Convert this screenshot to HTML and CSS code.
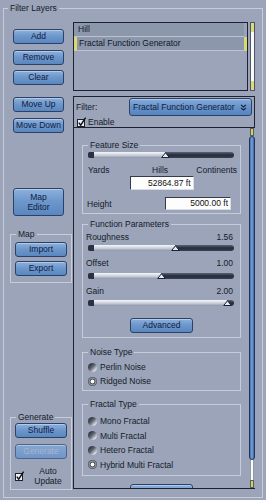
FILE: index.html
```html
<!DOCTYPE html>
<html lang="en">
<head>
    <meta charset="UTF-8">
    <meta name="viewport" content="width=device-width, initial-scale=1.0">
    <title>Filter Layers</title>
    <link rel="stylesheet" href="styles.css">
</head>
<body>
    <fieldset class="group outer">
        <legend>Filter Layers</legend>
        <div class="layout">
            <div class="side">
                <div class="stack stack-list">
                    <button class="btn">Add</button>
                    <button class="btn">Remove</button>
                    <button class="btn">Clear</button>
                </div>
                <div class="stack stack-move">
                    <button class="btn">Move Up</button>
                    <button class="btn">Move Down</button>
                </div>
                <button class="btn btn-tall">Map<br>Editor</button>

                <fieldset class="group side-group map-group">
                    <legend>Map</legend>
                    <button class="btn">Import</button>
                    <button class="btn">Export</button>
                </fieldset>

                <fieldset class="group side-group gen-group">
                    <legend>Generate</legend>
                    <button class="btn">Shuffle</button>
                    <button class="btn" disabled>Generate</button>
                    <div class="auto-update">
                        <svg class="check" width="10" height="10" viewBox="0 0 10 10">
                            <rect x="0.5" y="2.5" width="7" height="7" fill="#eef0f4" stroke="#1c2130"/>
                            <path d="M1.8 5.6 L3.7 8.2 L8.6 0.6" fill="none" stroke="#111" stroke-width="1.4"/>
                        </svg>
                        <span class="auto-text">Auto<br>Update</span>
                    </div>
                </fieldset>
            </div>

            <div class="main">
                <div class="list-wrap">
                    <ul class="layer-list">
                        <li>Hill</li>
                        <li class="selected">Fractal Function Generator</li>
                    </ul>
                    <div class="thin-scroll"></div>
                </div>

                <div class="panel">
                    <div class="panel-head">
                        <div class="filter-row">
                            <span class="filter-label">Filter:</span>
                            <div class="select">
                                <span>Fractal Function Generator</span>
                                <svg width="7" height="7" viewBox="0 0 7 7">
                                    <path d="M1 0.8 L3.5 3 L6 0.8 M1 3.8 L3.5 6 L6 3.8" fill="none" stroke="#15203a" stroke-width="1.1"/>
                                </svg>
                            </div>
                        </div>
                        <div class="enable-row">
                            <svg class="check" width="10" height="10" viewBox="0 0 10 10">
                                <rect x="0.5" y="2.5" width="7" height="7" fill="#eef0f4" stroke="#1c2130"/>
                                <path d="M1.8 5.6 L3.7 8.2 L8.6 0.6" fill="none" stroke="#111" stroke-width="1.4"/>
                            </svg>
                            <span>Enable</span>
                        </div>
                    </div>

                    <div class="panel-body">
                        <div class="scroll-content">
                            <fieldset class="group box fs-size">
                                <legend>Feature Size</legend>
                                <div class="slider"><span class="lo" style="width: 53%"></span><span class="knob"><svg width="9" height="6" viewBox="0 0 9 6"><path d="M0.7 5.5 L4.5 0.7 L8.3 5.5 Z" fill="#e8ecf2" stroke="#1b2233"/></svg></span><span class="hi"></span></div>
                                <div class="scale-row">
                                    <span>Yards</span>
                                    <span>Hills</span>
                                    <span class="scale-end">Continents</span>
                                </div>
                                <div class="num num-size">52864.87 ft</div>
                                <div class="height-row">
                                    <span>Height</span>
                                    <div class="num num-height">5000.00 ft</div>
                                </div>
                            </fieldset>

                            <fieldset class="group box fs-params">
                                <legend>Function Parameters</legend>
                                <div class="param-row"><span>Roughness</span><span>1.56</span></div>
                                <div class="slider s-rough"><span class="lo" style="width: 59.6%"></span><span class="knob"><svg width="9" height="6" viewBox="0 0 9 6"><path d="M0.7 5.5 L4.5 0.7 L8.3 5.5 Z" fill="#e8ecf2" stroke="#1b2233"/></svg></span><span class="hi"></span></div>
                                <div class="param-row"><span>Offset</span><span>1.00</span></div>
                                <div class="slider s-offset"><span class="lo" style="width: 50%"></span><span class="knob"><svg width="9" height="6" viewBox="0 0 9 6"><path d="M0.7 5.5 L4.5 0.7 L8.3 5.5 Z" fill="#e8ecf2" stroke="#1b2233"/></svg></span><span class="hi"></span></div>
                                <div class="param-row"><span>Gain</span><span>2.00</span></div>
                                <div class="slider s-gain"><span class="lo" style="width: 95.5%"></span><span class="knob"><svg width="9" height="6" viewBox="0 0 9 6"><path d="M0.7 5.5 L4.5 0.7 L8.3 5.5 Z" fill="#e8ecf2" stroke="#1b2233"/></svg></span><span class="hi"></span></div>
                                <button class="btn btn-wide">Advanced</button>
                            </fieldset>

                            <fieldset class="group box fs-noise">
                                <legend>Noise Type</legend>
                                <div class="radio-row"><span class="radio"></span>Perlin Noise</div>
                                <div class="radio-row"><span class="radio on"></span>Ridged Noise</div>
                            </fieldset>

                            <fieldset class="group box fs-fractal">
                                <legend>Fractal Type</legend>
                                <div class="radio-row"><span class="radio"></span>Mono Fractal</div>
                                <div class="radio-row"><span class="radio"></span>Multi Fractal</div>
                                <div class="radio-row"><span class="radio"></span>Hetero Fractal</div>
                                <div class="radio-row"><span class="radio on"></span>Hybrid Multi Fractal</div>
                            </fieldset>

                            <button class="btn btn-wide btn-cut" aria-hidden="true"></button>
                        </div>

                        <div class="thick-scroll">
                            <span class="cap"></span>
                            <span class="bar"></span>
                            <span class="track"></span>
                            <span class="cap"></span>
                        </div>
                    </div>
                </div>
            </div>
        </div>
    </fieldset>
</body>
</html>
```

FILE: styles.css
```css
* {
    box-sizing: border-box;
}

body {
    margin: 0;
    width: 266px;
    height: 500px;
    overflow: hidden;
    background-color: #9ba4b8;
    font-family: "Liberation Sans", Arial, sans-serif;
    font-size: 8.5px;
    line-height: 10px;
    color: #141b2b;
}

/* group boxes */

.group {
    margin: 0;
    padding: 0;
    min-width: 0;
    border: 1px solid #c6cdda;
}

.group legend {
    padding: 0 2px;
    margin-left: 5px;
    line-height: 10px;
}

.outer {
    margin: 3px 3px 0;
    padding: 9px 6px 7px 0;
}

.outer > legend {
    margin-left: 4px;
}

.layout {
    display: flex;
}

/* left column */

.side {
    width: 69px;
    display: flex;
    flex-direction: column;
    align-items: flex-start;
}

.stack {
    display: flex;
    flex-direction: column;
}

.stack-list {
    margin-top: 7px;
    gap: 5.5px;
}

.stack-move {
    margin-top: 12px;
    gap: 6px;
}

.btn {
    display: block;
    width: 51px;
    height: 15px;
    margin: 0 0 0 9px;
    padding: 0;
    border: 1px solid #2b4169;
    border-radius: 3px;
    background: linear-gradient(#8db0dc, #6e98cc 45%, #5a87c0);
    box-shadow: inset 0 1px 0 rgba(255, 255, 255, 0.35);
    font: inherit;
    line-height: 13px;
    color: #10203f;
    text-align: center;
}

.btn:disabled {
    border-color: #4b658f;
    background: linear-gradient(#86a6d0, #7095c6);
    color: #a3b7d3;
}

.btn-tall {
    height: 28px;
    margin-top: 55px;
    line-height: 10px;
}

.side-group {
    margin-left: 6px;
    width: 62px;
}

.side-group .btn {
    width: 52px;
    margin-left: 4px;
}

.map-group {
    margin-top: 13px;
    padding: 3px 0 6px;
}

.map-group .btn + .btn {
    margin-top: 4px;
}

.gen-group {
    margin-top: 129px;
    padding: 1px 0 3px;
}

.gen-group .btn + .btn {
    margin-top: 6px;
}

.auto-update {
    display: flex;
    align-items: center;
    margin-top: 7px;
    padding-left: 4px;
}

.check {
    display: block;
    flex: none;
}

.auto-text {
    flex: 1;
    text-align: center;
}

/* right column */

.main {
    width: 183px;
}

.list-wrap {
    display: flex;
    height: 69px;
    margin-bottom: 5px;
}

.layer-list {
    width: 175px;
    margin: 0;
    padding: 0;
    list-style: none;
    border: 1px solid #1c2232;
}

.layer-list li {
    height: 14px;
    margin-right: 3px;
    padding-left: 4px;
    line-height: 13px;
    background-color: #8d97ab;
    border-bottom: 1px solid #bcc3d0;
    color: #10182a;
}

.layer-list li.selected {
    margin-right: 0;
    padding-left: 2px;
    border-left: 3px solid #d9d873;
    border-right: 3px solid #d9d873;
}

.thin-scroll {
    width: 5px;
    margin-left: 2px;
    border: 1px solid #4d5466;
    background: linear-gradient(#dcdb78 0 9px, #fbfbfb 9px calc(100% - 9px), #dcdb78 calc(100% - 9px));
}

.panel {
    width: 182px;
    height: 393px;
    border: 1px solid #1c2232;
    border-right: none;
}

.panel-head {
    height: 31px;
    border-right: 1px solid #1c2232;
    border-bottom: 1px solid #1c2232;
}

.filter-row {
    display: flex;
    align-items: center;
    height: 19px;
    padding: 1px 2px 0;
}

.filter-label {
    flex: 1;
}

.select {
    display: flex;
    align-items: center;
    justify-content: space-between;
    width: 123px;
    height: 18px;
    padding: 0 4px 0 3px;
    border: 1px solid #2b4169;
    border-radius: 3px;
    background: linear-gradient(#86abd9, #6a95cb 45%, #5684bf);
    box-shadow: inset 0 1px 0 rgba(255, 255, 255, 0.3);
    color: #10203f;
}

.enable-row {
    display: flex;
    align-items: center;
    gap: 1px;
    height: 11px;
    padding-left: 3px;
}

.panel-body {
    display: flex;
    height: 360px;
}

.scroll-content {
    width: 175px;
    overflow: hidden;
    padding-top: 12px;
}

.box {
    margin-left: 8px;
    width: 159px;
}

/* slider */

.slider {
    display: flex;
    width: 146px;
    height: 6px;
    margin-left: 5px;
    border-radius: 3px;
    background: linear-gradient(#5a6377, #242b3b 50%, #39414f);
}

.slider .lo {
    display: block;
    border-left: 6px solid #2a3142;
    border-radius: 2px 0 0 2px;
    background: linear-gradient(#f6f7fa, #c9ced9 55%, #8b93a6);
}

.slider .knob {
    display: flex;
    justify-content: center;
    width: 0;
}

.slider .knob svg {
    flex: none;
    display: block;
}

.slider .hi {
    flex: 1;
}

/* feature size */

.fs-size {
    padding: 2px 0 3px;
}

.scale-row {
    display: grid;
    grid-template-columns: 64px auto 1fr;
    margin-top: 7px;
    padding: 0 3px 0 5px;
}

.scale-end {
    justify-self: end;
}

.num {
    height: 14px;
    padding-right: 2px;
    line-height: 12px;
    text-align: right;
    background-color: #fdfdfd;
    border: 1px solid;
    border-color: #343a4a #d9dde5 #d9dde5 #343a4a;
    color: #111;
}

.num-size {
    width: 64px;
    margin: 1px auto 0;
}

.height-row {
    display: flex;
    align-items: center;
    margin-top: 7px;
    padding-left: 4px;
}

.num-height {
    width: 66px;
    height: 13px;
    line-height: 11px;
    margin: 0 9px 0 auto;
}

/* function parameters */

.fs-params {
    margin-top: 5px;
    padding: 3px 0 4px;
}

.param-row {
    display: flex;
    justify-content: space-between;
    padding: 0 7px 0 3px;
}

.slider + .param-row {
    margin-top: 7px;
}

.s-rough {
    margin-top: 3px;
}

.s-offset {
    margin-top: 5px;
}

.s-gain {
    margin-top: 4px;
}

.btn-wide {
    width: 63px;
    margin: 12px auto 0;
}

/* radio groups */

.fs-noise {
    margin-top: 9px;
    padding: 3px 0 2px;
}

.fs-fractal {
    margin-top: 8px;
    padding: 5px 0 3px;
}

.radio-row {
    display: flex;
    align-items: center;
    gap: 3px;
    height: 14px;
    padding-left: 5px;
}

.fs-fractal .radio-row {
    height: 14.5px;
}

.radio {
    width: 9px;
    height: 9px;
    border-radius: 50%;
    background: linear-gradient(135deg, #161a22, #5d6270 45%, #d8dbe2 80%, #ffffff);
}

.radio.on {
    background: radial-gradient(circle, #ffffff 0 1.6px, #2a2e38 2.4px, #9fa4ae 3.3px, #3a3e48 4.5px);
}

.btn-cut {
    margin-top: 8px;
    height: 15px;
}

/* panel scrollbar */

.thick-scroll {
    display: flex;
    flex-direction: column;
    align-items: center;
    width: 6px;
}

.thick-scroll .cap {
    width: 4px;
    height: 8px;
    background: linear-gradient(90deg, #b9b75a, #e6e58c, #b9b75a);
    border: 1px solid #5b5f52;
}

.thick-scroll .bar {
    width: 6px;
    height: 324px;
    border: 1px solid #1f3560;
    border-radius: 3px;
    background: linear-gradient(90deg, #3f69a7, #7aa3d6 45%, #3c64a0);
}

.thick-scroll .track {
    flex: 1;
    width: 4px;
    background-color: #fbfbfb;
    border-left: 1px solid #8f97a8;
    border-right: 1px solid #8f97a8;
}
```
